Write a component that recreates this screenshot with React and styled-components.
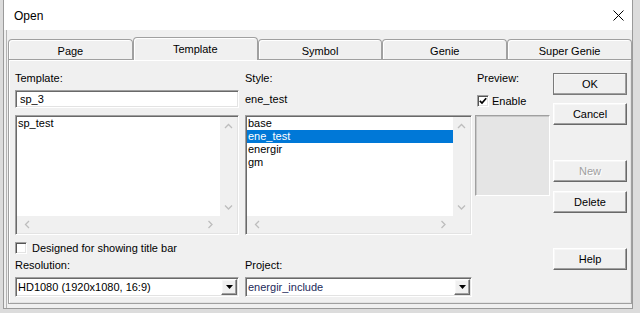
import React from "react";
import styled, { createGlobalStyle } from "styled-components";

const GlobalStyle = createGlobalStyle`
  html, body { margin: 0; padding: 0; }
  body {
    background: #dcdcdc;
    font-family: "Liberation Sans", Arial, sans-serif;
    font-size: 11px;
    color: #000;
    overflow: hidden;
  }
  * { box-sizing: border-box; }
`;

const sunken = `
  border: 1px solid;
  border-color: #a0a0a0 #ffffff #ffffff #a0a0a0;
  box-shadow: inset 1px 1px 0 #696969, inset -1px -1px 0 #e3e3e3;
  padding: 1px;
`;

const raised = `
  border: 1px solid;
  border-color: #ffffff #696969 #696969 #ffffff;
  box-shadow: inset -1px -1px 0 #a0a0a0, inset 1px 1px 0 #f7f7f7;
`;

const Window = styled.div`
  width: 630px;
  height: 309px;
  margin-left: 3px;
  border: 1px solid #9a9a9a;
  border-top: none;
  background: #f0f0f0;
  display: flex;
  flex-direction: column;
`;

const TitleBar = styled.div`
  height: 30px;
  flex: none;
  background: #fff;
  display: flex;
  align-items: center;
  justify-content: space-between;
  padding: 0 8px 0 10px;
`;

const Title = styled.span`
  font-size: 12px;
  padding-top: 1px;
`;

const Client = styled.div`
  flex: 1;
  padding: 7px 0 0 4px;
  display: flex;
  flex-direction: column;
  box-shadow: inset 2px 0 0 #f0f0f0, inset 3px 0 0 #b4b4b4;
`;

const TabRow = styled.div`
  display: flex;
  height: 22px;
  align-items: flex-end;
  position: relative;
  z-index: 1;
`;

const Tab = styled.div`
  flex: 1;
  height: ${(p) => (p.$active ? 23 : 20)}px;
  margin-bottom: ${(p) => (p.$active ? -1 : 0)}px;
  border: 1px solid #a0a0a0;
  border-bottom: none;
  border-radius: 4px 4px 0 0;
  box-shadow: inset 1px 1px 0 #fff;
  background: #f0f0f0;
  display: flex;
  align-items: center;
  justify-content: center;
  padding-top: ${(p) => (p.$active ? 1 : 2)}px;
  padding-bottom: ${(p) => (p.$active ? 2 : 0)}px;
`;

const Panel = styled.div`
  height: 245px;
  border: 1px solid #a0a0a0;
  box-shadow: inset 1px 1px 0 #fff, inset -1px -1px 0 #e3e3e3;
  padding: 12px 0 0 6px;
  display: flex;
  align-items: flex-start;
`;

const MainGrid = styled.div`
  display: grid;
  grid-template-columns: 224px 227px;
  column-gap: 6px;
  align-items: start;
`;

const Label = styled.div`
  height: 13px;
  line-height: 13px;
  margin-top: ${(p) => p.$mt || 0}px;
  white-space: nowrap;
`;

const StaticText = styled.div`
  margin-top: 5px;
  height: 18px;
  line-height: 18px;
`;

const TextInput = styled.input`
  ${sunken}
  margin-top: 5px;
  height: 18px;
  width: 100%;
  background: #fff;
  font: inherit;
  color: #000;
  padding-left: 4px;
  outline: none;
`;

const ListBox = styled.div`
  ${sunken}
  margin-top: 7px;
  height: 120px;
  background: #fff;
  display: grid;
  grid-template-columns: 1fr 17px;
  grid-template-rows: 1fr 17px;
`;

const Items = styled.div`
  background: #fff;
  overflow: hidden;
`;

const Item = styled.div`
  height: 13px;
  line-height: 13px;
  padding-left: 1px;
  background: ${(p) => (p.$selected ? "#0078d7" : "transparent")};
  color: ${(p) => (p.$selected ? "#fff" : "#000")};
`;

const VScroll = styled.div`
  background: #f0f0f0;
  display: flex;
  flex-direction: column;
  justify-content: space-between;
  align-items: center;
  padding: 6px 0 5px;
`;

const HScroll = styled.div`
  background: #f0f0f0;
  display: flex;
  justify-content: space-between;
  align-items: center;
  padding: 0 6px 0 7px;
`;

const Corner = styled.div`
  background: #f0f0f0;
`;

const CheckRow = styled.div`
  grid-column: 1 / span 2;
  margin-top: ${(p) => p.$mt || 0}px;
  height: 13px;
  display: flex;
  align-items: center;
  gap: ${(p) => p.$gap || 5}px;
`;

const CheckBox = styled.div`
  width: 12px;
  height: 12px;
  border: 1px solid;
  border-color: #a0a0a0 #ffffff #ffffff #a0a0a0;
  box-shadow: inset 1px 1px 0 #555, inset -1px -1px 0 #e3e3e3;
  background: #fff;
  display: flex;
  align-items: center;
  justify-content: center;
`;

const Combo = styled.div`
  ${sunken}
  margin-top: 5px;
  height: 20px;
  background: #fff;
  display: flex;
  align-items: center;
`;

const ComboText = styled.span`
  flex: 1;
  padding-left: 1px;
  color: ${(p) => p.$color || "#000"};
  white-space: nowrap;
`;

const DropButton = styled.div`
  ${raised}
  width: 16px;
  height: 100%;
  background: #f0f0f0;
  display: flex;
  align-items: center;
  justify-content: center;
`;

const PreviewCol = styled.div`
  margin-left: 3px;
  width: 75px;
  display: flex;
  flex-direction: column;
`;

const PreviewInner = styled.div`
  padding-left: 2px;
`;

const PreviewBox = styled.div`
  margin-top: 8px;
  height: 81px;
  border: 1px solid;
  border-color: #a0a0a0 #ffffff #ffffff #a0a0a0;
  box-shadow: inset 1px 1px 0 #c8c8c8;
  background: #e5e5e5;
`;

const ButtonCol = styled.div`
  margin-left: 3px;
  width: 74px;
  display: flex;
  flex-direction: column;
`;

const Button = styled.div`
  ${raised}
  margin-top: ${(p) => p.$mt || 0}px;
  height: 22px;
  background: #f0f0f0;
  display: flex;
  align-items: center;
  justify-content: center;
  color: ${(p) => (p.$disabled ? "#a0a0a0" : "#000")};
  text-shadow: ${(p) => (p.$disabled ? "1px 1px 0 #fff" : "none")};
  ${(p) =>
    p.$default &&
    `border-color: #f4f4f4 #404040 #404040 #f4f4f4;
     outline: 1px solid #7a7a7a;
     outline-offset: -1px;`}
`;

const Chevron = ({ dir }) => {
  const pts = {
    up: "1,5 4.5,1.5 8,5",
    down: "1,1.5 4.5,5 8,1.5",
    left: "5,1 1.5,4.5 5,8",
    right: "1.5,1 5,4.5 1.5,8",
  }[dir];
  const vertical = dir === "up" || dir === "down";
  return (
    <svg width={vertical ? 9 : 7} height={vertical ? 7 : 9} viewBox={vertical ? "0 0 9 7" : "0 0 7 9"}>
      <polyline points={pts} fill="none" stroke="#bdbdbd" strokeWidth="1.3" />
    </svg>
  );
};

const List = ({ items, selected }) => (
  <ListBox>
    <Items>
      {items.map((it) => (
        <Item key={it} $selected={it === selected}>
          {it}
        </Item>
      ))}
    </Items>
    <VScroll>
      <Chevron dir="up" />
      <Chevron dir="down" />
    </VScroll>
    <HScroll>
      <Chevron dir="left" />
      <Chevron dir="right" />
    </HScroll>
    <Corner />
  </ListBox>
);

const Check = ({ checked }) => (
  <CheckBox>
    {checked && (
      <svg width="8" height="8" viewBox="0 0 8 8">
        <path d="M0.8 3.8 L3 6 L7.2 1.2" fill="none" stroke="#000" strokeWidth="1.7" />
      </svg>
    )}
  </CheckBox>
);

const Dropdown = ({ value, color }) => (
  <Combo>
    <ComboText $color={color}>{value}</ComboText>
    <DropButton>
      <svg width="7" height="4" viewBox="0 0 7 4">
        <polygon points="0,0 7,0 3.5,4" fill="#000" />
      </svg>
    </DropButton>
  </Combo>
);

const tabs = ["Page", "Template", "Symbol", "Genie", "Super Genie"];

export default function App() {
  return (
    <>
      <GlobalStyle />
      <Window>
        <TitleBar>
          <Title>Open</Title>
          <svg width="11" height="11" viewBox="0 0 11 11">
            <path d="M0.5 0.5 L10.5 10.5 M10.5 0.5 L0.5 10.5" stroke="#000" strokeWidth="1" />
          </svg>
        </TitleBar>
        <Client>
          <TabRow>
            {tabs.map((t) => (
              <Tab key={t} $active={t === "Template"}>
                {t}
              </Tab>
            ))}
          </TabRow>
          <Panel>
            <MainGrid>
              <Label>Template:</Label>
              <Label>Style:</Label>
              <TextInput readOnly defaultValue="sp_3" />
              <StaticText>ene_test</StaticText>
              <List items={["sp_test"]} />
              <List items={["base", "ene_test", "energir", "gm"]} selected="ene_test" />
              <CheckRow $mt={6}>
                <Check />
                <span>Designed for showing title bar</span>
              </CheckRow>
              <Label $mt={5}>Resolution:</Label>
              <Label $mt={5}>Project:</Label>
              <Dropdown value="HD1080 (1920x1080, 16:9)" />
              <Dropdown value="energir_include" color="#1c2a5a" />
            </MainGrid>
            <PreviewCol>
              <PreviewInner>
                <Label>Preview:</Label>
                <CheckRow $mt={9} $gap={3}>
                  <Check checked />
                  <span>Enable</span>
                </CheckRow>
              </PreviewInner>
              <PreviewBox />
            </PreviewCol>
            <ButtonCol>
              <Button $mt={1} $default>OK</Button>
              <Button $mt={8}>Cancel</Button>
              <Button $mt={35} $disabled>New</Button>
              <Button $mt={9}>Delete</Button>
              <Button $mt={35}>Help</Button>
            </ButtonCol>
          </Panel>
        </Client>
      </Window>
    </>
  );
}
